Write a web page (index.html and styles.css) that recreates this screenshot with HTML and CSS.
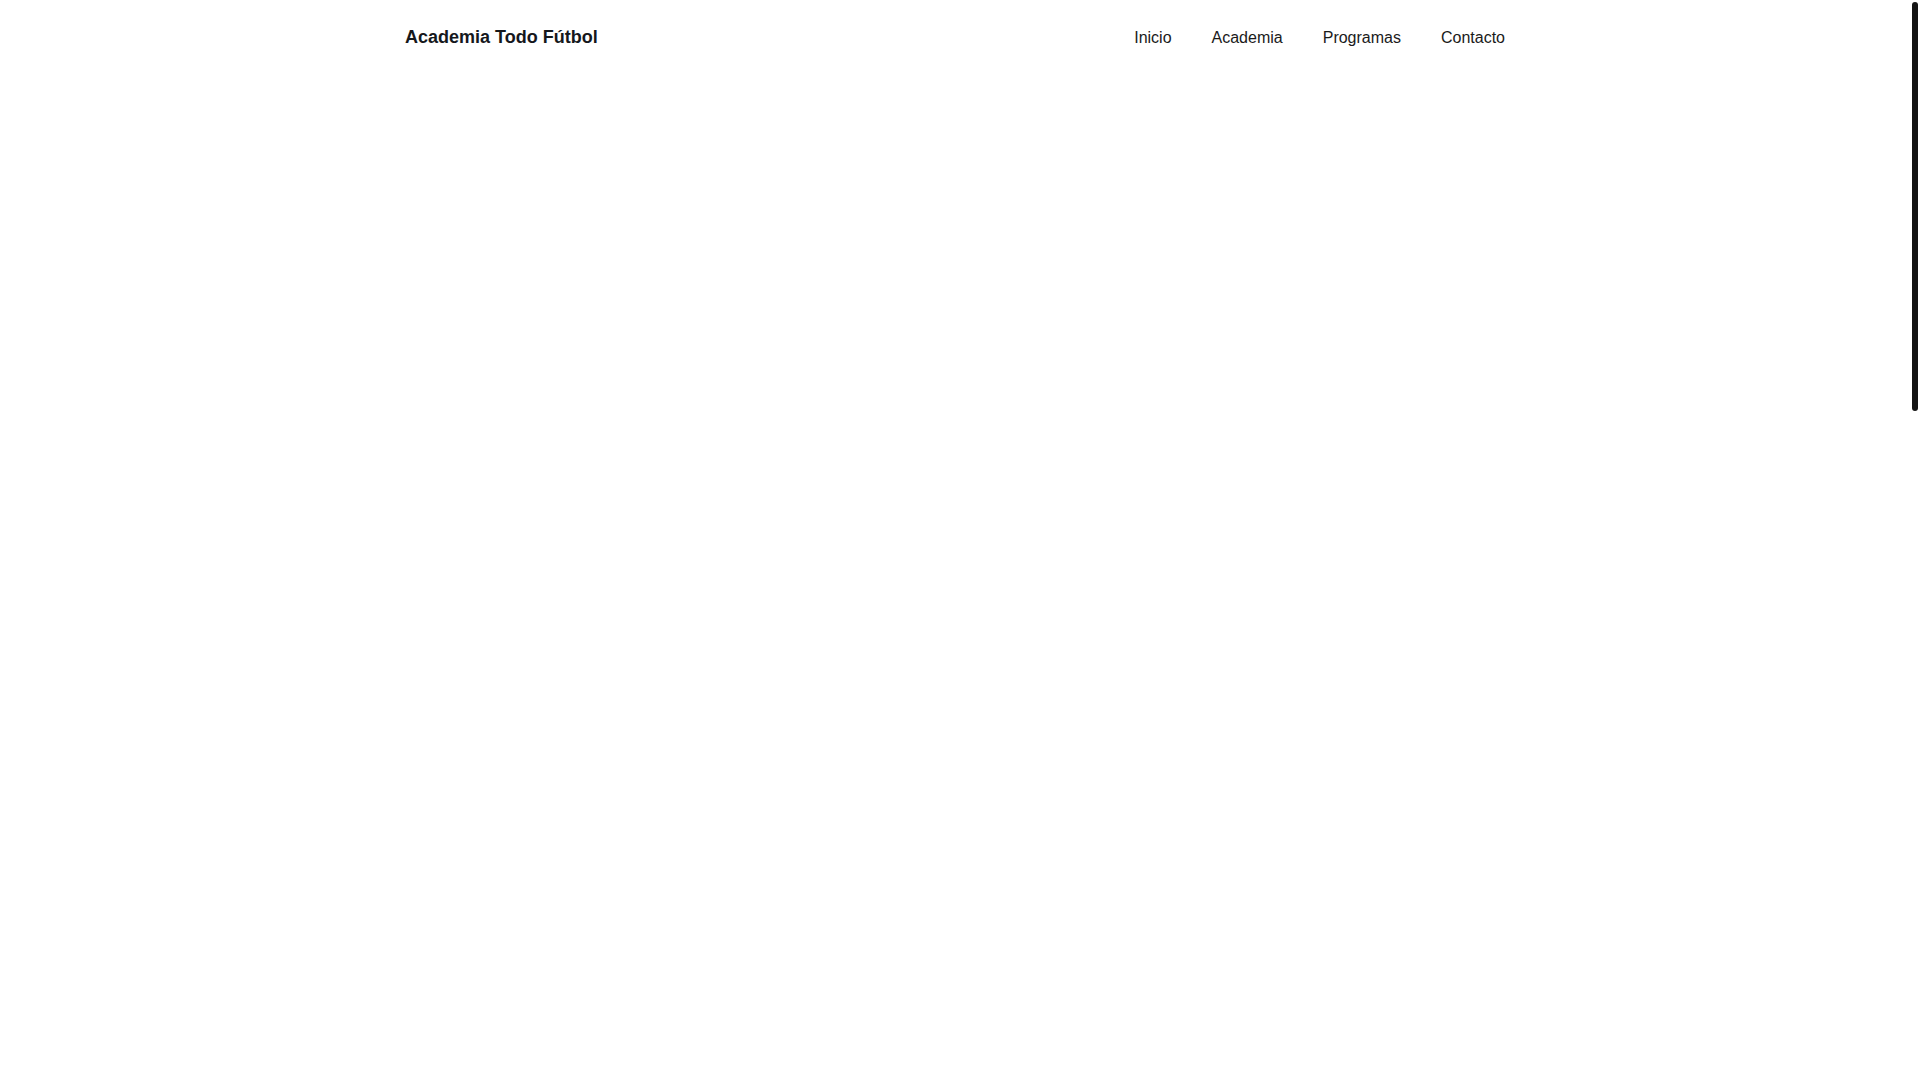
FILE: index.html
```html
<!DOCTYPE html>
<html lang="es">
<head>
<meta charset="utf-8">
<title>Academia Todo Fútbol</title>
<link rel="stylesheet" href="styles.css">
</head>
<body>
<header class="site-header">
  <div class="container header-inner">
    <a class="brand" href="#">Academia Todo Fútbol</a>
    <nav class="nav">
      <a href="#inicio">Inicio</a>
      <a href="#academia">Academia</a>
      <a href="#programas">Programas</a>
      <a href="#contacto">Contacto</a>
    </nav>
  </div>
</header>
<main class="page">
  <section class="section" id="inicio"></section>
  <section class="section" id="academia"></section>
  <section class="section" id="programas"></section>
  <section class="section" id="contacto"></section>
</main>
<div class="scrollbar" aria-hidden="true"><div class="scrollbar-thumb"></div></div>
</body>
</html>
```

FILE: styles.css
```css
html {
  background: #ffffff;
}
body {
  margin: 0;
  padding-right: 10px;
  font-family: "Liberation Sans", Arial, sans-serif;
  color: #1a1a1a;
  background: #ffffff;
}
.container {
  width: 1100px;
  margin: 0 auto;
}
.site-header {
  height: 75px;
}
.header-inner {
  height: 100%;
  display: flex;
  align-items: center;
  justify-content: space-between;
}
.brand {
  font-size: 18px;
  font-weight: 700;
  color: #15181c;
  text-decoration: none;
}
.nav {
  display: flex;
  gap: 40px;
}
.nav a {
  font-size: 16px;
  color: #1a1a1a;
  text-decoration: none;
}
.page {
  display: flex;
  flex-direction: column;
}
.section {
  height: 687px;
}
.scrollbar {
  position: fixed;
  top: 0;
  right: 0;
  width: 10px;
  height: 100vh;
  background: #ffffff;
  padding: 2px;
  box-sizing: border-box;
}
.scrollbar-thumb {
  width: 6px;
  height: 409px;
  background: #141414;
  border-radius: 3px;
}
```
